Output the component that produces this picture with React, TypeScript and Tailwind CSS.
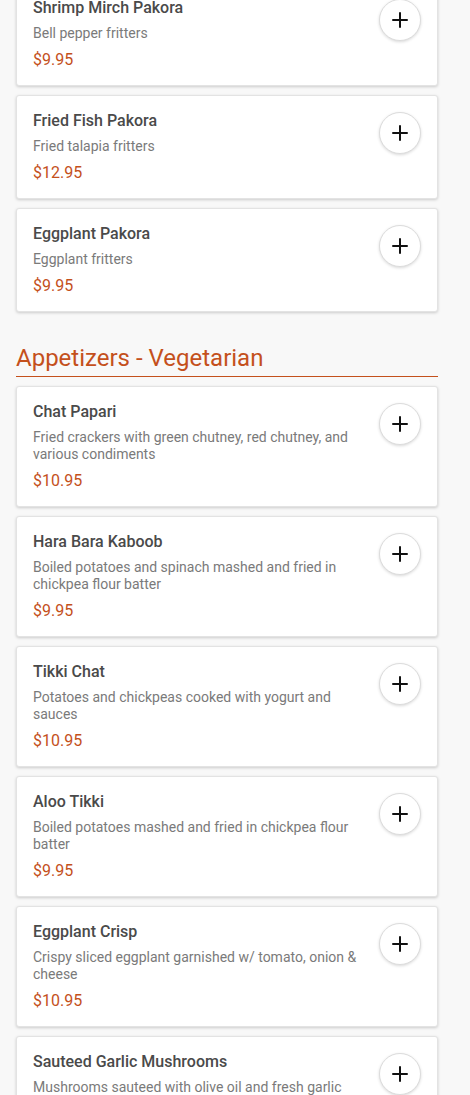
import React from 'react';
import { Plus } from 'lucide-react';

type Item = { name: string; desc: string; price: string };

const nonVeg: Item[] = [
  { name: 'Shrimp Mirch Pakora', desc: 'Bell pepper fritters', price: '$9.95' },
  { name: 'Fried Fish Pakora', desc: 'Fried talapia fritters', price: '$12.95' },
  { name: 'Eggplant Pakora', desc: 'Eggplant fritters', price: '$9.95' },
];

const veg: Item[] = [
  { name: 'Chat Papari', desc: 'Fried crackers with green chutney, red chutney, and various condiments', price: '$10.95' },
  { name: 'Hara Bara Kaboob', desc: 'Boiled potatoes and spinach mashed and fried in chickpea flour batter', price: '$9.95' },
  { name: 'Tikki Chat', desc: 'Potatoes and chickpeas cooked with yogurt and sauces', price: '$10.95' },
  { name: 'Aloo Tikki', desc: 'Boiled potatoes mashed and fried in chickpea flour batter', price: '$9.95' },
  { name: 'Eggplant Crisp', desc: 'Crispy sliced eggplant garnished w/ tomato, onion & cheese', price: '$10.95' },
  { name: 'Sauteed Garlic Mushrooms', desc: 'Mushrooms sauteed with olive oil and fresh garlic', price: '$9.95' },
];

const MenuCard: React.FC<{ item: Item }> = ({ item }) => (
  <div className="flex items-start justify-between rounded-[3px] border border-[#e3e3e3] bg-white px-4 pt-[15px] pb-[15px] shadow-[0_1px_3px_rgba(0,0,0,0.18)]">
    <div className="min-w-0 flex-1 pr-4">
      <div className="text-[16px] font-medium leading-5 text-[#4a4a4a]">{item.name}</div>
      <div className="mt-[7px] text-[14px] leading-[17px] text-[#7a7a7a]">{item.desc}</div>
      <div className="mt-2 text-[16px] leading-5 text-[#c4501c]">{item.price}</div>
    </div>
    <button className="mt-px flex h-[42px] w-[42px] shrink-0 items-center justify-center rounded-full border border-[#dcdcdc] bg-white shadow-[0_1px_3px_rgba(0,0,0,0.15)]">
      <Plus size={24} strokeWidth={2} color="#111111" />
    </button>
  </div>
);

export default function App() {
  return (
    <div
      className="h-[1095px] overflow-hidden bg-[#f8f8f8]"
      style={{ fontFamily: 'Roboto, "Liberation Sans", sans-serif' }}
    >
      <div className="-mt-[18px] w-[422px] ml-4">
        <div className="flex flex-col gap-[9px]">
          {nonVeg.map((item) => (
            <MenuCard key={item.name} item={item} />
          ))}
        </div>

        <h2 className="mt-[30px] mb-[9px] border-b border-[#c4501c] pb-[2px] text-[24px] font-normal leading-8 text-[#c4501c]">
          Appetizers - Vegetarian
        </h2>

        <div className="flex flex-col gap-[9px]">
          {veg.map((item) => (
            <MenuCard key={item.name} item={item} />
          ))}
        </div>
      </div>
    </div>
  );
}
